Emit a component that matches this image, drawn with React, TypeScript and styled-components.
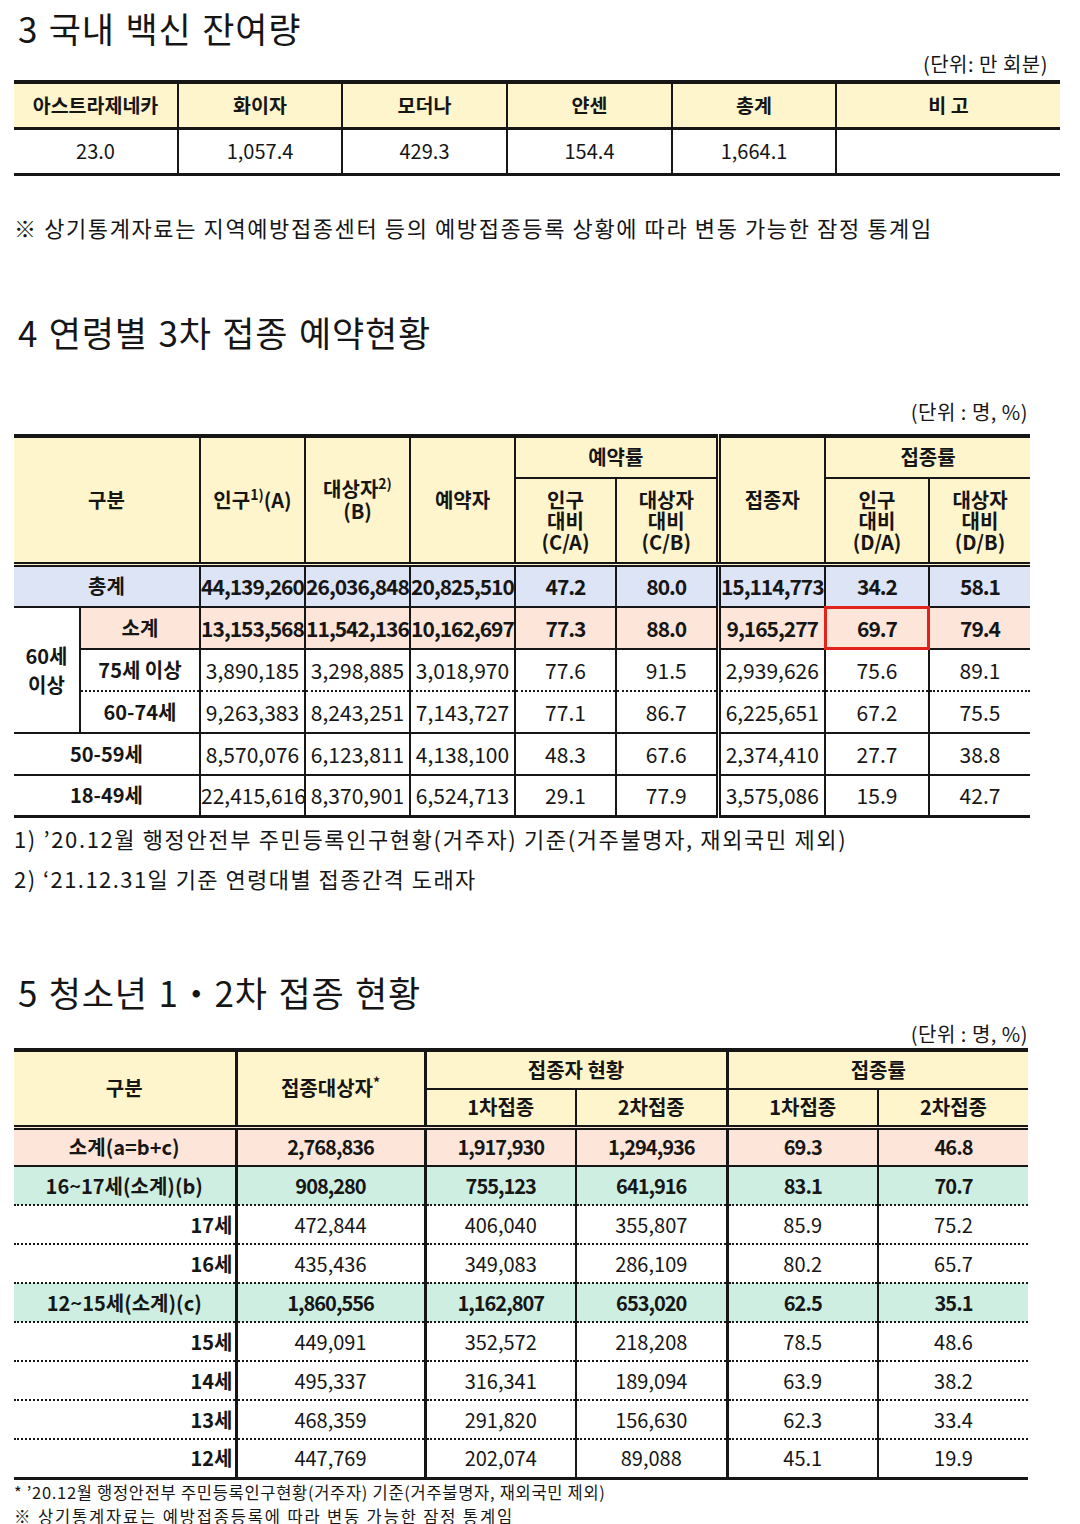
import React from 'react';
import styled, { createGlobalStyle, css } from 'styled-components';

const INK = '#161616';
const YELLOW = '#fff5cc';
const BLUE = '#dde4f6';
const PEACH = '#fde6d9';
const MINT = '#cdeee1';

const GlobalStyle = createGlobalStyle`
  html, body { margin: 0; padding: 0; background: #fff; }
  body {
    font-family: "Noto Sans CJK KR", "Noto Sans", sans-serif;
    color: ${INK};
  }
  sup { font-size: 0.7em; line-height: 0; vertical-align: 0.55em; }
`;

const Page = styled.div`
  width: 1080px;
  padding: 0 0 0 14px;
  box-sizing: border-box;
`;

const Title = styled.h2<{ $top: number }>`
  margin: ${p => p.$top}px 0 0;
  padding-left: 4px;
  font-size: 35px;
  line-height: 44px;
  font-weight: 400;
  letter-spacing: 0.8px;
  word-spacing: 2px;
  white-space: nowrap;
`;

const Unit = styled.div<{ $width: number; $top: number }>`
  width: ${p => p.$width}px;
  margin-top: ${p => p.$top}px;
  text-align: right;
  font-size: 20px;
  line-height: 24px;
  letter-spacing: 0.5px;
`;

const Note = styled.p<{ $top: number; $size: number; $lh: number; $ls: number }>`
  margin: ${p => p.$top}px 0 0;
  font-size: ${p => p.$size}px;
  line-height: ${p => p.$lh}px;
  letter-spacing: ${p => p.$ls}px;
  white-space: nowrap;
`;

const Table = styled.table<{ $width: number; $top: number }>`
  width: ${p => p.$width}px;
  margin-top: ${p => p.$top}px;
  border-collapse: collapse;
  table-layout: fixed;
  border-top: 4px solid ${INK};
  border-bottom: 3px solid ${INK};
  border-left: hidden;
  border-right: hidden;
`;

const Row = styled.tr<{ $h: number }>`
  height: ${p => p.$h}px;
`;

type Line = 'solid' | 'thick' | 'dotted' | 'double' | 'none';

const line = (l: Line) => {
  switch (l) {
    case 'solid': return `2px solid ${INK}`;
    case 'thick': return `3px solid ${INK}`;
    case 'dotted': return `2px dotted ${INK}`;
    case 'double': return `5px double ${INK}`;
    default: return 'none';
  }
};

type CellProps = {
  $bg?: string;
  $bold?: boolean;
  $tight?: boolean;
  $align?: 'left' | 'center' | 'right';
  $r?: Line;
  $b?: Line;
  $size?: number;
  $lh?: number;
  $mark?: boolean;
  $pad?: string;
};

const cellCss = css<CellProps>`
  padding: ${p => p.$pad ?? '0'};
  background: ${p => p.$bg ?? 'transparent'};
  font-weight: ${p => (p.$bold ? 700 : 400)};
  letter-spacing: ${p => (p.$tight ? '-1px' : '0')};
  text-align: ${p => p.$align ?? 'center'};
  font-size: ${p => p.$size ?? 20}px;
  line-height: ${p => p.$lh ?? 24}px;
  border-right: ${p => line(p.$r ?? 'solid')};
  border-bottom: ${p => line(p.$b ?? 'solid')};
  white-space: nowrap;
  vertical-align: middle;
  ${p => p.$mark && css`
    outline: 3px solid #e2231c;
    outline-offset: -2px;
  `}
`;

const Cell = styled.td<CellProps>`
  ${cellCss}
`;

const Head = styled.th<CellProps>`
  ${cellCss}
  background: ${YELLOW};
  font-weight: 700;
`;

/* ---------- section 3 ---------- */

const stockHeads = ['아스트라제네카', '화이자', '모더나', '얀센', '총계', '비 고'];
const stockVals = ['23.0', '1,057.4', '429.3', '154.4', '1,664.1', ''];
const stockCols = [164, 164, 165, 165, 164, 224];

const StockTable = () => (
  <Table $width={1046} $top={4}>
    <colgroup>
      {stockCols.map((w, i) => <col key={i} style={{ width: w }} />)}
    </colgroup>
    <thead>
      <Row $h={46}>
        {stockHeads.map(h => <Head key={h} $b="thick" $size={19.5}>{h}</Head>)}
      </Row>
    </thead>
    <tbody>
      <Row $h={46}>
        {stockVals.map((v, i) => <Cell key={i} $b="none">{v}</Cell>)}
      </Row>
    </tbody>
  </Table>
);

/* ---------- section 4 ---------- */

const bookCols = [66, 120, 105, 105, 105, 101, 102, 107, 104, 101];

type Vals = string[];

const BookVals = ({ vals, bg, bold, b, mark }: { vals: Vals; bg?: string; bold?: boolean; b?: Line; mark?: number }) => (
  <>
    {vals.map((v, i) => (
      <Cell
        key={i}
        $bg={bg}
        $bold={bold}
        $tight={bold}
        $b={b}
        $size={21}
        $r={i === 4 ? 'double' : 'solid'}
        $mark={mark === i}
      >
        {v}
      </Cell>
    ))}
  </>
);

const BookTable = () => (
  <Table $width={1016} $top={10}>
    <colgroup>
      {bookCols.map((w, i) => <col key={i} style={{ width: w }} />)}
    </colgroup>
    <thead>
      <Row $h={42}>
        <Head colSpan={2} rowSpan={2} $b="double">구분</Head>
        <Head rowSpan={2} $b="double">인구<sup>1)</sup>(A)</Head>
        <Head rowSpan={2} $b="double" $lh={22}>대상자<sup>2)</sup><br />(B)</Head>
        <Head rowSpan={2} $b="double">예약자</Head>
        <Head colSpan={2} $r="double">예약률</Head>
        <Head rowSpan={2} $b="double">접종자</Head>
        <Head colSpan={2}>접종률</Head>
      </Row>
      <Row $h={87}>
        <Head $b="double" $lh={21}>인구<br />대비<br />(C/A)</Head>
        <Head $b="double" $lh={21} $r="double">대상자<br />대비<br />(C/B)</Head>
        <Head $b="double" $lh={21}>인구<br />대비<br />(D/A)</Head>
        <Head $b="double" $lh={21}>대상자<br />대비<br />(D/B)</Head>
      </Row>
    </thead>
    <tbody>
      <Row $h={42}>
        <Cell colSpan={2} $bg={BLUE} $bold>총계</Cell>
        <BookVals bg={BLUE} bold vals={['44,139,260', '26,036,848', '20,825,510', '47.2', '80.0', '15,114,773', '34.2', '58.1']} />
      </Row>
      <Row $h={42}>
        <Cell rowSpan={3} $bold $lh={29}>60세<br />이상</Cell>
        <Cell $bg={PEACH} $bold>소계</Cell>
        <BookVals bg={PEACH} bold mark={6} vals={['13,153,568', '11,542,136', '10,162,697', '77.3', '88.0', '9,165,277', '69.7', '79.4']} />
      </Row>
      <Row $h={42}>
        <Cell $bold $b="dotted">75세 이상</Cell>
        <BookVals b="dotted" vals={['3,890,185', '3,298,885', '3,018,970', '77.6', '91.5', '2,939,626', '75.6', '89.1']} />
      </Row>
      <Row $h={42}>
        <Cell $bold>60-74세</Cell>
        <BookVals vals={['9,263,383', '8,243,251', '7,143,727', '77.1', '86.7', '6,225,651', '67.2', '75.5']} />
      </Row>
      <Row $h={42}>
        <Cell colSpan={2} $bold>50-59세</Cell>
        <BookVals vals={['8,570,076', '6,123,811', '4,138,100', '48.3', '67.6', '2,374,410', '27.7', '38.8']} />
      </Row>
      <Row $h={42}>
        <Cell colSpan={2} $bold $b="none">18-49세</Cell>
        <BookVals b="none" vals={['22,415,616', '8,370,901', '6,524,713', '29.1', '77.9', '3,575,086', '15.9', '42.7']} />
      </Row>
    </tbody>
  </Table>
);

/* ---------- section 5 ---------- */

const teenCols = [222, 189, 151, 151, 151, 150];
const teenRight: Line[] = ['thick', 'solid', 'thick', 'solid', 'solid'];

type TeenRow = { label: string; vals: Vals; bg?: string; sub?: boolean; b: Line };

const teenRows: TeenRow[] = [
  { label: '소계(a=b+c)', bg: PEACH, vals: ['2,768,836', '1,917,930', '1,294,936', '69.3', '46.8'], b: 'solid' },
  { label: '16~17세(소계)(b)', bg: MINT, vals: ['908,280', '755,123', '641,916', '83.1', '70.7'], b: 'dotted' },
  { label: '17세', sub: true, vals: ['472,844', '406,040', '355,807', '85.9', '75.2'], b: 'dotted' },
  { label: '16세', sub: true, vals: ['435,436', '349,083', '286,109', '80.2', '65.7'], b: 'dotted' },
  { label: '12~15세(소계)(c)', bg: MINT, vals: ['1,860,556', '1,162,807', '653,020', '62.5', '35.1'], b: 'dotted' },
  { label: '15세', sub: true, vals: ['449,091', '352,572', '218,208', '78.5', '48.6'], b: 'dotted' },
  { label: '14세', sub: true, vals: ['495,337', '316,341', '189,094', '63.9', '38.2'], b: 'dotted' },
  { label: '13세', sub: true, vals: ['468,359', '291,820', '156,630', '62.3', '33.4'], b: 'dotted' },
  { label: '12세', sub: true, vals: ['447,769', '202,074', '89,088', '45.1', '19.9'], b: 'none' },
];

const TeenTable = () => (
  <Table $width={1014} $top={2}>
    <colgroup>
      {teenCols.map((w, i) => <col key={i} style={{ width: w }} />)}
    </colgroup>
    <thead>
      <Row $h={39}>
        <Head rowSpan={2} $r="thick" $b="double">구분</Head>
        <Head rowSpan={2} $r="thick" $b="double">접종대상자<sup>*</sup></Head>
        <Head colSpan={2} $r="thick">접종자 현황</Head>
        <Head colSpan={2}>접종률</Head>
      </Row>
      <Row $h={38}>
        <Head $b="double">1차접종</Head>
        <Head $b="double" $r="thick">2차접종</Head>
        <Head $b="double">1차접종</Head>
        <Head $b="double">2차접종</Head>
      </Row>
    </thead>
    <tbody>
      {teenRows.map(r => (
        <Row $h={39} key={r.label}>
          <Cell $bg={r.bg} $bold $b={r.b} $r="thick" $align={r.sub ? 'right' : 'center'} $pad={r.sub ? '0 2px 0 0' : '0'}>
            {r.label}
          </Cell>
          {r.vals.map((v, i) => (
            <Cell key={i} $bg={r.bg} $bold={!r.sub} $tight={!r.sub} $b={r.b} $r={teenRight[i]}>{v}</Cell>
          ))}
        </Row>
      ))}
    </tbody>
  </Table>
);

const App: React.FC = () => (
  <>
    <GlobalStyle />
    <Page>
      <Title $top={6}>3 국내 백신 잔여량</Title>
      <Unit $width={1034} $top={2}>(단위: 만 회분)</Unit>
      <StockTable />
      <Note $top={36} $size={22} $lh={30} $ls={1.6}>※ 상기통계자료는 지역예방접종센터 등의 예방접종등록 상황에 따라 변동 가능한 잠정 통계임</Note>

      <Title $top={68}>4 연령별 3차 접종 예약현황</Title>
      <Unit $width={1014} $top={46}>(단위 : 명, %)</Unit>
      <BookTable />
      <Note $top={0} $size={22} $lh={40} $ls={1.63}>1) ’20.12월 행정안전부 주민등록인구현황(거주자) 기준(거주불명자, 재외국민 제외)</Note>
      <Note $top={0} $size={22} $lh={40} $ls={1.45}>2) ‘21.12.31일 기준 연령대별 접종간격 도래자</Note>

      <Title $top={72}>5 청소년 1・2차 접종 현황</Title>
      <Unit $width={1014} $top={8}>(단위 : 명, %)</Unit>
      <TeenTable />
      <Note $top={0} $size={16.5} $lh={24} $ls={0.7}>* ’20.12월 행정안전부 주민등록인구현황(거주자) 기준(거주불명자, 재외국민 제외)</Note>
      <Note $top={0} $size={16.5} $lh={24} $ls={1.85}>※ 상기통계자료는 예방접종등록에 따라 변동 가능한 잠정 통계임</Note>
    </Page>
  </>
);

export default App;
